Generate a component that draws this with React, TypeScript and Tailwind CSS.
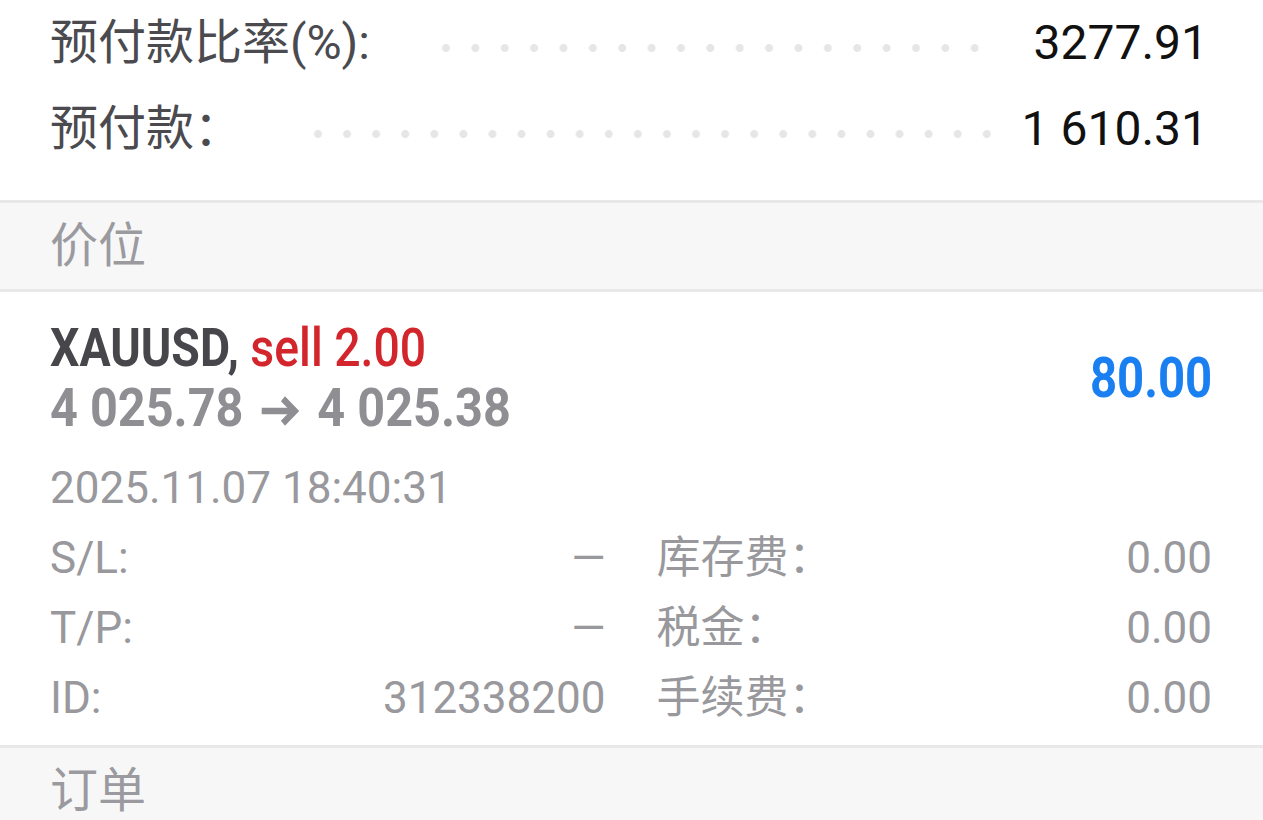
import React from "react";

const font = { fontFamily: "Roboto, 'Noto Sans CJK SC', sans-serif" };

function Dots({ className }: { className: string }) {
  return (
    <div
      className={`h-[10px] bg-[radial-gradient(circle,#e6e6e6_3.6px,transparent_4.3px)] bg-[length:28px_10px] bg-repeat-space ${className}`}
    />
  );
}

function SectionHeader({ title }: { title: string }) {
  return (
    <div className="flex h-[92px] items-center border-y-[3px] border-[#e8e8e8] bg-[#f7f7f7] pl-[50px] text-[48px] text-[#9a9a9f]">
      <span className="leading-none">{title}</span>
    </div>
  );
}

function Detail({ label, value }: { label: string; value: string }) {
  return (
    <div className="flex h-[70px] items-center justify-between">
      <span>{label}</span>
      <span>{value}</span>
    </div>
  );
}

function Arrow() {
  return (
    <svg
      viewBox="0 0 48 36"
      className="mx-[16px] inline-block h-[34px] w-[50px] align-[-2px]"
      fill="none"
      stroke="currentColor"
      strokeWidth="7"
    >
      <path d="M2 18 H40" />
      <path d="M27 5 L41 18 L27 31" strokeLinejoin="miter" />
    </svg>
  );
}

export default function App() {
  return (
    <div className="h-[820px] w-[1263px] overflow-hidden bg-white" style={font}>
      <div className="h-[200px] pl-[50px] pr-[55px] text-[48px] leading-none">
        <div className="flex h-[86px] items-center">
          <span className="text-[#4a4a4f]">预付款比率(%):</span>
          <Dots className="ml-[62px] mr-[44px] mt-[10px] flex-1" />
          <span className="text-[#111]">3277.91</span>
        </div>
        <div className="flex h-[86px] items-center">
          <span className="text-[#4a4a4f]">预付款：</span>
          <Dots className="ml-[62px] mr-[21px] mt-[10px] flex-1" />
          <span className="text-[#111]">1 610.31</span>
        </div>
      </div>

      <SectionHeader title="价位" />

      <div className="pl-[50px] pr-[51px] pt-[26px]">
        <div className="flex items-center justify-between">
          <div className="flex flex-col">
            <div className="flex h-[60px] items-center text-[53px] leading-none">
              <span className="inline-block origin-left scale-x-[0.875] whitespace-nowrap">
                <span className="font-bold text-[#46464b]">XAUUSD,</span>{" "}
                <span className="font-medium text-[#d3262c]">sell 2.00</span>
              </span>
            </div>
            <div className="flex h-[60px] items-center text-[54px] leading-none">
              <span className="inline-block origin-left scale-x-[0.9] whitespace-nowrap font-bold text-[#8e8e93]">
                4 025.78
                <Arrow />
                4 025.38
              </span>
            </div>
          </div>
          <span className="inline-block origin-right scale-x-[0.86] text-[55px] font-bold leading-none text-[#1a80f2]">
            80.00
          </span>
        </div>

        <div className="mt-[15px] flex h-[70px] items-center text-[44px] leading-none text-[#98989d]">
          2025.11.07 18:40:31
        </div>

        <div className="grid grid-cols-2 gap-x-[51px] text-[44px] leading-none text-[#98989d]">
          <div>
            <Detail label="S/L:" value="—" />
            <Detail label="T/P:" value="—" />
            <Detail label="ID:" value="312338200" />
          </div>
          <div>
            <Detail label="库存费：" value="0.00" />
            <Detail label="税金：" value="0.00" />
            <Detail label="手续费：" value="0.00" />
          </div>
        </div>
        <div className="h-[12px]" />
      </div>

      <SectionHeader title="订单" />
    </div>
  );
}
